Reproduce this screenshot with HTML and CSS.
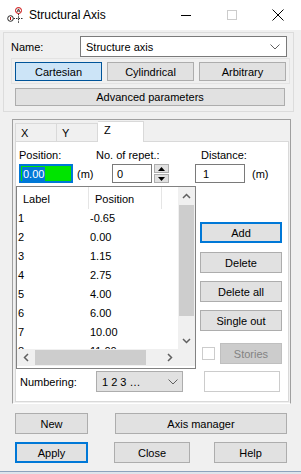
FILE: index.html
```html
<!DOCTYPE html>
<html lang="en">
<head>
  <meta charset="UTF-8" />
  <meta name="viewport" content="width=device-width, initial-scale=1.0" />
  <title>Structural Axis</title>
  <link rel="stylesheet" href="styles.css">
</head>
<body>
  <div class="window">
    <header class="titlebar">
      <svg class="app-icon" width="16" height="16" viewBox="0 0 16 16">
        <circle cx="3.5" cy="11.5" r="2.8" fill="#fff" stroke="#222" stroke-width="1"/>
        <line x1="3.5" y1="10" x2="3.5" y2="13" stroke="#c00" stroke-width="1"/>
        <line x1="6.5" y1="11.5" x2="16" y2="11.5" stroke="#333" stroke-dasharray="1.5 1"/>
        <circle cx="11.5" cy="3.5" r="3" fill="#fff" stroke="#c00" stroke-width="1"/>
        <path d="M10 5 L11.5 1.8 L13 5 M10.6 4 H12.4" fill="none" stroke="#222" stroke-width="0.8"/>
        <line x1="11.5" y1="6.8" x2="11.5" y2="16" stroke="#333" stroke-dasharray="1.5 1"/>
      </svg>
      <span class="title">Structural Axis</span>
      <div class="win-ctrls">
        <span class="ctrl"><svg width="10" height="10"><line x1="0" y1="5.5" x2="10" y2="5.5" stroke="#000"/></svg></span>
        <span class="ctrl"><svg width="10" height="10"><rect x="0.5" y="0.5" width="9" height="9" fill="none" stroke="#cccccc"/></svg></span>
        <span class="ctrl"><svg width="12" height="12"><path d="M0.5 0.5 L11.5 11.5 M11.5 0.5 L0.5 11.5" stroke="#000"/></svg></span>
      </div>
    </header>

    <main class="dialog">
      <section class="group-top">
        <div class="name-row">
          <span class="name-label">Name:</span>
          <div class="combo combo-name">
            <span>Structure axis</span>
            <svg class="chev" width="10" height="6"><polyline points="0.5,0.5 5,5 9.5,0.5" fill="none" stroke="#606060"/></svg>
          </div>
        </div>
        <div class="mode-box">
          <button class="btn btn-mode btn-sel">Cartesian</button>
          <button class="btn btn-mode">Cylindrical</button>
          <button class="btn btn-mode">Arbitrary</button>
        </div>
        <button class="btn btn-adv">Advanced parameters</button>
      </section>

      <section class="tab-frame">
        <div class="tabs">
          <div class="tab">X</div>
          <div class="tab">Y</div>
          <div class="tab tab-active">Z</div>
        </div>
        <div class="tab-panel">
          <div class="labels-row">
            <span class="lbl-pos">Position:</span>
            <span class="lbl-rep">No. of repet.:</span>
            <span>Distance:</span>
          </div>
          <div class="inputs-row">
            <div class="field field-pos"><span class="sel">0.00</span></div>
            <span class="unit unit-1">(m)</span>
            <div class="field field-rep">0</div>
            <div class="spinner">
              <span class="spin"><svg width="7" height="4"><polygon points="0,4 3.5,0 7,4" fill="#000"/></svg></span>
              <span class="spin"><svg width="7" height="4"><polygon points="0,0 3.5,4 7,0" fill="#000"/></svg></span>
            </div>
            <div class="field field-dist">1</div>
            <span class="unit unit-2">(m)</span>
          </div>

          <div class="work">
            <div class="list">
              <div class="list-body">
                <div class="list-row list-head">
                  <span class="c1">Label</span>
                  <span class="c2">Position</span>
                </div>
                <div class="list-row"><span class="c1">1</span><span class="c2">-0.65</span></div>
                <div class="list-row"><span class="c1">2</span><span class="c2">0.00</span></div>
                <div class="list-row"><span class="c1">3</span><span class="c2">1.15</span></div>
                <div class="list-row"><span class="c1">4</span><span class="c2">2.75</span></div>
                <div class="list-row"><span class="c1">5</span><span class="c2">4.00</span></div>
                <div class="list-row"><span class="c1">6</span><span class="c2">6.00</span></div>
                <div class="list-row"><span class="c1">7</span><span class="c2">10.00</span></div>
                <div class="list-row"><span class="c1">8</span><span class="c2">11.00</span></div>
              </div>
              <div class="vscroll">
                <span class="arrow"><svg width="9" height="6"><polyline points="1,5 4.5,1.5 8,5" fill="none" stroke="#606060" stroke-width="1.5"/></svg></span>
                <span class="vthumb"></span>
                <span class="arrow arrow-end"><svg width="9" height="6"><polyline points="1,1 4.5,4.5 8,1" fill="none" stroke="#606060" stroke-width="1.5"/></svg></span>
              </div>
              <div class="hscroll">
                <span class="arrow"><svg width="6" height="9"><polyline points="5,1 1.5,4.5 5,8" fill="none" stroke="#606060" stroke-width="1.5"/></svg></span>
                <span class="hthumb"></span>
                <span class="arrow arrow-end"><svg width="6" height="9"><polyline points="1,1 4.5,4.5 1,8" fill="none" stroke="#606060" stroke-width="1.5"/></svg></span>
              </div>
              <div class="corner"></div>
            </div>

            <div class="side">
              <button class="btn btn-side btn-default btn-add">Add</button>
              <button class="btn btn-side">Delete</button>
              <button class="btn btn-side">Delete all</button>
              <button class="btn btn-side">Single out</button>
              <div class="stories-row">
                <span class="check"></span>
                <button class="btn btn-stories">Stories</button>
              </div>
            </div>

            <div class="numbering">
              <span class="num-label">Numbering:</span>
              <div class="combo combo-num">
                <span>1 2 3 &hellip;</span>
                <svg class="chev" width="10" height="6"><polyline points="0.5,0.5 5,5 9.5,0.5" fill="none" stroke="#606060"/></svg>
              </div>
            </div>
            <div class="field field-small"></div>
          </div>
        </div>
      </section>

      <div class="actions">
        <div class="action-row">
          <button class="btn btn-new">New</button>
          <button class="btn btn-manager">Axis manager</button>
        </div>
        <div class="action-row">
          <button class="btn btn-default btn-apply">Apply</button>
          <button class="btn btn-close">Close</button>
          <button class="btn btn-help">Help</button>
        </div>
      </div>
    </main>
    <div class="win-bottom"></div>
  </div>
</body>
</html>
```

FILE: styles.css
```css
* {
  box-sizing: border-box;
}

body {
  margin: 0;
  font-family: "Liberation Sans", Arial, sans-serif;
  font-size: 11px;
  color: #000;
  background: #f0f0f0;
}

.window {
  width: 301px;
  height: 474px;
  display: flex;
  flex-direction: column;
  background: #f0f0f0;
}

/* title bar */
.titlebar {
  height: 30px;
  background: #fff;
  display: flex;
  align-items: center;
  flex-shrink: 0;
}

.app-icon {
  margin-left: 7px;
}

.title {
  margin-left: 6px;
  font-size: 12px;
}

.win-ctrls {
  margin-left: auto;
  display: flex;
}

.ctrl {
  width: 46px;
  height: 30px;
  display: flex;
  align-items: center;
  justify-content: center;
}

/* dialog body */
.dialog {
  padding: 2px 0 0 3px;
  flex: 1;
}

.btn {
  font-family: inherit;
  font-size: 11px;
  color: #000;
  background: #e1e1e1;
  border: 1px solid #adadad;
  padding: 0;
  margin: 0;
  display: flex;
  align-items: center;
  justify-content: center;
}

.btn-default {
  border: 2px solid #0078d7;
}

.group-top {
  width: 291px;
  height: 80px;
  border: 1px solid #dcdcdc;
  padding: 3px 3px 0 7px;
}

.name-row {
  display: flex;
  align-items: center;
  height: 21px;
}

.name-label {
  width: 69px;
}

.combo {
  display: flex;
  align-items: center;
  justify-content: space-between;
  padding: 0 6px 0 5px;
}

.combo-name {
  width: 207px;
  height: 21px;
  background: #fff;
  border: 1px solid #7a7a7a;
}

.mode-box {
  margin-top: 1px;
  width: 279px;
  height: 26px;
  border: 1px solid #e3e3e3;
  padding: 3px 3px 0 3px;
  display: flex;
  justify-content: space-between;
}

.btn-mode {
  width: 87px;
  height: 19px;
}

.btn-sel {
  background: #cce4f7;
  border-color: #005499;
}

.btn-adv {
  margin: 4px 0 0 4px;
  width: 270px;
  height: 18px;
}

/* tabs */
.tab-frame {
  margin: 7px 0 0 9px;
  width: 279px;
  height: 285px;
  border-top: 1px solid #a0a0a0;
  border-left: 1px solid #a0a0a0;
  border-right: 1px solid #a0a0a0;
  border-bottom: 1px solid #fff;
  padding: 0 1px 0 2px;
}

.tabs {
  height: 21px;
  display: flex;
  align-items: flex-end;
}

.tab {
  height: 18px;
  border: 1px solid #d9d9d9;
  border-bottom: none;
  padding: 3px 0 0 5px;
}

.tab:nth-child(1) {
  width: 42px;
}

.tab:nth-child(2) {
  width: 41px;
  border-left: none;
}

.tab-active {
  position: relative;
  width: 46px;
  height: 21px;
  margin-bottom: -1px;
  background: #fff;
  border-left: none;
  padding: 2px 0 0 6px;
}

.tab-panel {
  width: 274px;
  height: 261px;
  background: #fff;
  border: 1px solid #d9d9d9;
  padding-top: 7px;
}

.labels-row {
  display: flex;
  height: 13px;
  line-height: 13px;
  padding-left: 3px;
}

.lbl-pos {
  width: 77px;
}

.lbl-rep {
  width: 105px;
}

.inputs-row {
  margin-top: 2px;
  display: flex;
  align-items: center;
  height: 19px;
  padding-left: 3px;
}

.field {
  height: 19px;
  background: #fff;
  border: 1px solid #7a7a7a;
  padding-left: 3px;
  display: flex;
  align-items: center;
}

.field-pos {
  width: 54px;
  background: #00e400;
  border: 2px solid #0078d7;
  padding-left: 1px;
}

.sel {
  background: #0078d7;
  color: #fff;
  padding: 0 1px;
  line-height: 14px;
}

.unit-1 {
  margin-left: 4px;
  width: 35px;
}

.field-rep {
  width: 40px;
  padding-left: 4px;
}

.spinner {
  margin-left: 2px;
  width: 15px;
  height: 19px;
  display: flex;
  flex-direction: column;
  gap: 1px;
}

.spin {
  flex: 1;
  background: #e1e1e1;
  border: 1px solid #adadad;
  display: flex;
  align-items: center;
  justify-content: center;
}

.field-dist {
  margin-left: 26px;
  width: 50px;
  padding-left: 7px;
}

.unit-2 {
  margin-left: 7px;
}

/* list + side buttons */
.work {
  margin-top: 3px;
  display: grid;
  grid-template-columns: 180px 82px;
  grid-template-rows: 183px 21px;
  column-gap: 4px;
  row-gap: 2px;
}

.list {
  border: 1px solid #828282;
  display: grid;
  grid-template-columns: 161px 17px;
  grid-template-rows: 162px 17px;
  overflow: hidden;
}

.list-body {
  overflow: hidden;
}

.list-row {
  display: flex;
  height: 19px;
  line-height: 19px;
}

.list-head {
  height: 22px;
  line-height: 24px;
}

.list-head .c1,
.list-head .c2 {
  border-right: 1px solid #e5e5e5;
  padding-left: 6px;
}

.c1 {
  width: 72px;
  padding-left: 1px;
}

.c2 {
  width: 73px;
  padding-left: 1px;
}

.vscroll {
  background: #f0f0f0;
  display: flex;
  flex-direction: column;
  align-items: center;
}

.arrow {
  width: 17px;
  height: 17px;
  display: flex;
  align-items: center;
  justify-content: center;
  flex-shrink: 0;
}

.arrow-end {
  margin-left: auto;
}

.vscroll .arrow-end {
  margin: auto 0 0;
}

.vthumb {
  margin-top: 1px;
  width: 15px;
  height: 111px;
  background: #cdcdcd;
}

.hscroll {
  background: #f0f0f0;
  display: flex;
  align-items: center;
}

.hthumb {
  margin-left: 1px;
  width: 111px;
  height: 15px;
  background: #cdcdcd;
}

.corner {
  background: #f0f0f0;
}

.side {
  display: flex;
  flex-direction: column;
}

.btn-side {
  width: 82px;
  height: 21px;
  margin-top: 8px;
}

.btn-add {
  margin-top: 36px;
}

.btn-side:nth-child(2) {
  margin-top: 9px;
}

.stories-row {
  margin-top: 12px;
  display: flex;
  align-items: center;
}

.check {
  margin-left: 2px;
  width: 13px;
  height: 13px;
  background: #fff;
  border: 1px solid #cccccc;
}

.btn-stories {
  margin-left: 5px;
  width: 63px;
  height: 21px;
  background: #cccccc;
  border-color: #bfbfbf;
  color: #838383;
}

.numbering {
  display: flex;
  align-items: center;
}

.num-label {
  width: 80px;
  padding-left: 4px;
}

.combo-num {
  width: 87px;
  height: 21px;
  background: #e1e1e1;
  border: 1px solid #adadad;
  padding: 0 4px 0 5px;
}

.field-small {
  margin-left: 4px;
  width: 76px;
  height: 21px;
  border-color: #cccccc;
}

/* bottom buttons */
.actions {
  margin: 9px 0 0 12px;
}

.action-row {
  display: flex;
  height: 21px;
}

.action-row + .action-row {
  margin-top: 8px;
}

.btn-new,
.btn-apply {
  width: 73px;
}

.btn-manager {
  margin-left: 27px;
  width: 172px;
}

.btn-close {
  margin-left: 26px;
  width: 76px;
}

.btn-help {
  margin-left: 24px;
  width: 73px;
}

.win-bottom {
  height: 3px;
  border-top: 1px solid #8ea3bd;
  background: #dfe5ec;
  flex-shrink: 0;
}
```
